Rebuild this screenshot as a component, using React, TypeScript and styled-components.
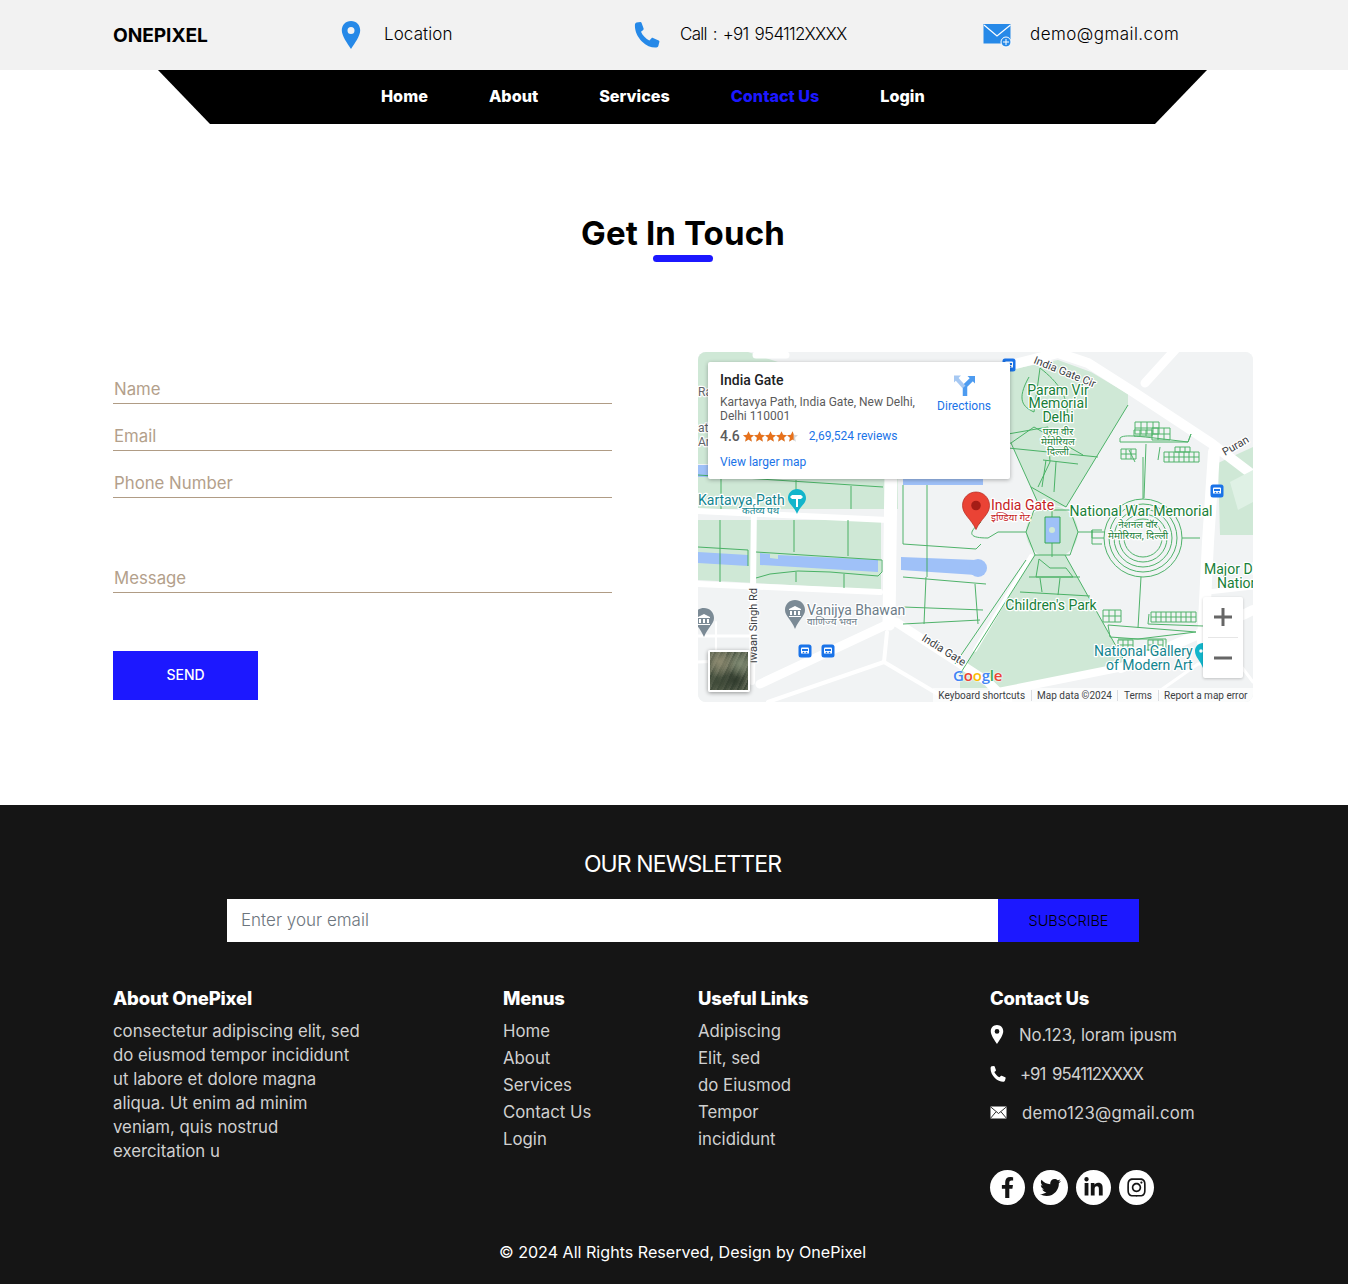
import React from 'react';
import styled, { createGlobalStyle } from 'styled-components';
import { FaFacebookF, FaTwitter, FaLinkedinIn, FaInstagram } from 'react-icons/fa';

const BLUE = '#1c18ff';
const FONT = 'Inter, "Noto Sans", sans-serif';

const GlobalStyle = createGlobalStyle`
  body {
    margin: 0;
    background: #fff;
    font-family: ${FONT};
    color: #000;
  }
  * { box-sizing: border-box; }
`;

const TopBar = styled.header`
  display: grid;
  grid-template-columns: 228px 293px 349px 1fr;
  align-items: center;
  height: 70px;
  padding-left: 113px;
  background: #f2f2f2;
`;

const Logo = styled.div`
  font-size: 19.2px;
  font-weight: 700;
  letter-spacing: -0.1px;
`;

const TopItem = styled.div<{ $gap: number; $spacing: number; $word?: number }>`
  display: flex;
  align-items: center;
  gap: ${(p) => p.$gap}px;
  font-size: 17px;
  font-weight: 300;
  letter-spacing: ${(p) => p.$spacing}px;
  word-spacing: ${(p) => p.$word ?? 0}px;
  margin-top: -3px;
  svg { flex: none; margin-top: 3px; }
`;

const Nav = styled.nav`
  display: flex;
  align-items: center;
  gap: 61px;
  width: 1049px;
  height: 54px;
  margin-left: 158px;
  padding: 0 0 2px 223px;
  background: #000;
  clip-path: polygon(0 0, 100% 0, calc(100% - 52px) 100%, 52px 100%);
`;

const NavLink = styled.a<{ $active?: boolean }>`
  color: ${(p) => (p.$active ? BLUE : '#fff')};
  font-size: 16.2px;
  font-weight: 800;
  text-decoration: none;
`;

const Main = styled.main`
  padding: 88px 95px 103px 113px;
`;

const Title = styled.h1`
  margin: 0;
  text-align: center;
  font-size: 33px;
  line-height: 42px;
  font-weight: 700;
  letter-spacing: 0.15px;
`;

const TitleBar = styled.div`
  width: 60px;
  height: 7px;
  margin: 1px auto 0;
  border-radius: 4px;
  background: ${BLUE};
`;

const ContactGrid = styled.div`
  display: grid;
  grid-template-columns: 499px 555px;
  gap: 86px;
  margin-top: 90px;
`;

const Form = styled.form`
  display: flex;
  flex-direction: column;
`;

const Field = styled.input<{ $top: number }>`
  display: block;
  width: 100%;
  height: 26px;
  margin-top: ${(p) => p.$top}px;
  padding: 0 1px 4px;
  border: 0;
  border-bottom: 1px solid #b09c85;
  background: transparent;
  font-family: ${FONT};
  font-size: 16.8px;
  outline: none;
  &::placeholder { color: #b3a08b; opacity: 1; }
`;

const SendButton = styled.button`
  width: 145px;
  height: 49px;
  margin-top: 58px;
  padding: 0 0 2px;
  border: 0;
  background: ${BLUE};
  color: #fff;
  font-family: ${FONT};
  font-size: 14px;
  font-weight: 500;
`;

const MapFrame = styled.div`
  position: relative;
  width: 555px;
  height: 350px;
  border-radius: 8px;
  overflow: hidden;
  background: #f1f3f4;
  font-family: Roboto, sans-serif;
  svg.base { display: block; }
`;

const InfoCard = styled.div`
  position: absolute;
  left: 10px;
  top: 10px;
  width: 302px;
  height: 117px;
  padding: 9px 12px;
  border-radius: 2px;
  background: #fff;
  box-shadow: 0 1px 4px rgba(0, 0, 0, 0.3);
  color: #5b5b5b;
  font-size: 12px;
  line-height: 14px;
`;

const PlaceName = styled.div`
  color: #202124;
  font-size: 14px;
  font-weight: 500;
  line-height: 18px;
  margin-bottom: 6px;
`;

const RatingRow = styled.div`
  display: flex;
  align-items: center;
  margin-top: 5px;
  height: 16px;
  font-size: 14px;
  font-weight: 500;
`;

const Stars = styled.span`
  display: inline-flex;
  margin: 0 11px 0 3px;
`;

const MapLink = styled.a`
  color: #1a73e8;
  font-size: 12px;
  font-weight: 400;
  text-decoration: none;
`;

const LargerMap = styled(MapLink)`
  display: block;
  margin-top: 11px;
`;

const Directions = styled.div`
  position: absolute;
  right: 19px;
  top: 12px;
  display: flex;
  flex-direction: column;
  align-items: center;
  gap: 3px;
  color: #1a73e8;
  font-size: 12px;
`;

const ZoomBox = styled.div`
  position: absolute;
  right: 10px;
  top: 245px;
  width: 40px;
  height: 81px;
  display: flex;
  flex-direction: column;
  align-items: center;
  justify-content: center;
  border-radius: 2px;
  background: #fff;
  box-shadow: 0 1px 3px rgba(0, 0, 0, 0.2);
`;

const ZoomDivider = styled.div`
  width: 30px;
  height: 1px;
  margin: 0;
  background: #e6e6e6;
`;

const ZoomButton = styled.div`
  display: flex;
  align-items: center;
  justify-content: center;
  width: 40px;
  height: 40px;
`;

const Thumb = styled.div`
  position: absolute;
  left: 10px;
  top: 298px;
  width: 42px;
  height: 42px;
  border: 2px solid #fff;
  border-radius: 2px;
  box-shadow: 0 1px 4px rgba(0, 0, 0, 0.4);
  background:
    radial-gradient(circle at 25% 25%, #8d8a70 0, transparent 40%),
    radial-gradient(circle at 80% 30%, #7f8a72 0, transparent 35%),
    radial-gradient(circle at 65% 75%, #2f3a2c 0, transparent 45%),
    radial-gradient(circle at 20% 80%, #3f4a38 0, transparent 40%),
    repeating-linear-gradient(115deg, #5c6450 0 2px, #6f7562 2px 4px, #465040 4px 6px);
`;

const Attribution = styled.div`
  position: absolute;
  right: 0;
  bottom: 0;
  display: flex;
  align-items: center;
  height: 14px;
  color: #3c4043;
  font-size: 10px;
  background: rgba(255, 255, 255, 0.7);
`;

const AttrItem = styled.span`
  padding: 0 5.5px;
  border-left: 1px solid #dadce0;
  &:first-child { border-left: 0; }
`;

const GoogleMark = styled.div`
  position: absolute;
  left: 255px;
  top: 313px;
  font-family: "Open Sans", sans-serif;
  font-size: 15px;
  font-weight: 600;
  letter-spacing: -0.2px;
  text-shadow: 0 0 2px #fff, 0 0 2px #fff;
  span:nth-child(1), span:nth-child(4) { color: #4285f4; }
  span:nth-child(2), span:nth-child(6) { color: #ea4335; }
  span:nth-child(3) { color: #fbbc05; }
  span:nth-child(5) { color: #34a853; }
`;

const Footer = styled.footer`
  height: 479px;
  padding-top: 45px;
  background: #151515;
  color: #fff;
`;

const NewsTitle = styled.h2`
  margin: 0 0 0 17px;
  text-align: center;
  font-size: 23px;
  line-height: 28px;
  font-weight: 400;
  letter-spacing: -0.9px;
`;

const NewsForm = styled.form`
  display: flex;
  width: 912px;
  height: 43px;
  margin: 21px 0 0 227px;
`;

const NewsInput = styled.input`
  flex: 1;
  min-width: 0;
  padding: 0 14px 2px;
  border: 0;
  background: #fff;
  font-family: ${FONT};
  font-size: 17px;
  font-weight: 300;
  outline: none;
  &::placeholder { color: #6c757d; opacity: 1; }
`;

const SubscribeButton = styled.button`
  width: 141px;
  border: 0;
  background: ${BLUE};
  color: #000;
  font-family: ${FONT};
  font-size: 14.5px;
  font-weight: 300;
`;

const Columns = styled.div`
  display: grid;
  grid-template-columns: 390px 195px 292px 1fr;
  margin-top: 43px;
  padding-left: 113px;
`;

const ColTitle = styled.h3`
  margin: 0 0 8px;
  font-size: 18.5px;
  line-height: 26px;
  font-weight: 800;
  letter-spacing: -0.2px;
`;

const AboutText = styled.p`
  margin: 1px 0 0;
  color: #d0d0d0;
  font-size: 16.8px;
  line-height: 24px;
  font-weight: 400;
  white-space: nowrap;
`;

const LinkList = styled.ul`
  margin: -1px 0 0;
  padding: 0;
  list-style: none;
`;

const LinkItem = styled.li`
  color: #d0d0d0;
  font-size: 16.8px;
  line-height: 27px;
  font-weight: 400;
`;

const ContactRows = styled.div`
  margin-top: -4px;
`;

const ContactRow = styled.div<{ $gap: number; $spacing: number; $word: number }>`
  display: flex;
  align-items: center;
  gap: ${(p) => p.$gap}px;
  height: 39px;
  color: #d0d0d0;
  font-size: 16.8px;
  font-weight: 400;
  letter-spacing: ${(p) => p.$spacing}px;
  word-spacing: ${(p) => p.$word}px;
  svg { flex: none; }
`;

const Socials = styled.div`
  display: flex;
  gap: 8px;
  margin-top: 38px;
`;

const SocialLink = styled.a`
  display: flex;
  align-items: center;
  justify-content: center;
  width: 35px;
  height: 35px;
  border-radius: 50%;
  background: #fff;
  color: #151515;
  font-size: 21px;
`;

const Copyright = styled.div`
  margin-top: 37px;
  padding-left: 17px;
  text-align: center;
  font-size: 16.1px;
  font-weight: 400;
  color: #fff;
`;

const PinIcon = ({ w, h, color }: { w: number; h: number; color: string }) => (
  <svg width={w} height={h} viewBox="0 0 20 28">
    <path
      fillRule="evenodd"
      fill={color}
      d="M10 0C4.5 0 .8 4.1.8 9.3c0 5.7 5.5 13.2 9.2 18.7 3.7-5.5 9.2-13 9.2-18.7C19.200 4.100 15.500 0 10 0Zm0 6a3.500 3.500 0 1 1 0 7 3.500 3.500 0 0 1 0-7Z"
    />
  </svg>
);

const PhoneIcon = ({ size, color }: { size: number; color: string }) => (
  <svg width={size} height={size} viewBox="0 0 26 26">
    <path
      fill={color}
      d="M2.500.6 6.400.1c.6 0 1 .3 1.200.9l2 5.500c.2.6 0 1.100-.4 1.500L7 9.700c1.500 3.600 4.900 7 8.400 8.700l2.100-2.200c.4-.4 1-.5 1.500-.3l5.700 2.500c.6.300.8.800.7 1.400l-1 3.900c-.3.900-1 1.600-2 1.800-4.500.4-9.800-1.500-14.500-6.100C3.400 14.800.900 9.400.9 3.500.9 2 1.400 1 2.500.6Z"
    />
  </svg>
);

const MailPlusIcon = () => (
  <svg width={29} height={25} viewBox="0 0 29 25">
    <rect x="0.500" y="1" width="27" height="19.500" fill="#2689e8" />
    <path d="M1 2 14 13 27.500 2" fill="none" stroke="#fff" strokeWidth="1.200" />
    <circle cx="23" cy="19" r="5" fill="#2689e8" stroke="#fff" strokeWidth="1" />
    <path d="M23 16v6M20 19h6" stroke="#fff" strokeWidth="1" />
  </svg>
);

const SmallMail = () => (
  <svg width={17} height={13} viewBox="0 0 17 13">
    <rect x="0.500" y="0.500" width="16" height="12" fill="#fff" />
    <path d="M.5.8 8.500 7.500 16.500.8M.5 12.300l5.500-6.500M16.500 12.300 11 5.800" fill="none" stroke="#151515" strokeWidth="0.900" />
  </svg>
);

const STAR = 'M5 .2 6.400 3.500 10 3.800 7.300 6.100 8.100 9.700 5 7.800 1.900 9.700 2.700 6.100 0 3.800 3.600 3.500Z';

const Star = ({ part }: { part: number }) => (
  <svg width={11} height={11} viewBox="0 0 10 10">
    <path d={STAR} fill="#d6d6d6" />
    <path d={STAR} fill="#e7711b" style={{ clipPath: `inset(0 ${100 - part}% 0 0)` }} />
  </svg>
);

const green = '#34a853';

// small walkway grids next to the memorial, drawn as cell lines
const PathGrid = ({ x, y, cols, rows, cell }: { x: number; y: number; cols: number; rows: number; cell: number }) => {
  const lines: string[] = [];
  for (let c = 0; c <= cols; c++) lines.push(`M${x + c * cell} ${y}v${rows * cell}`);
  for (let r = 0; r <= rows; r++) lines.push(`M${x} ${y + r * cell}h${cols * cell}`);
  return <path d={lines.join('')} />;
};

// the street map is a single drawing, map coordinates are px from its top-left corner
const StreetMap = () => {
  const label = { paintOrder: 'stroke' as const, stroke: '#fff', strokeWidth: 2.5, strokeLinejoin: 'round' as const };
  const rings = [39, 34, 29, 24, 19];
  return (
    <svg className="base" width={555} height={350} viewBox="0 0 555 350" fontFamily="Roboto, 'Noto Sans', sans-serif">
      <rect width="555" height="350" fill="#f1f3f4" />
      {/* parks */}
      <g fill="#cfe8d6">
        <path d="M0 0H50L80 10H10V112H0Z" />
        <path d="M10 10H200V157H0V125H10Z" />
        <path d="M0 168H183V238L0 228Z" />
        <path d="M300 20 360 8 393 20 430 42 430 53 368 155 340 151 313 91 280 91V20Z" />
        <path d="M337 203 367 203 428 312 300 338 262 338 262 322Z" />
        <circle cx="354" cy="180" r="26" />
        <path d="M520 111 555 95V183H522Z" />
      </g>
      {/* roads */}
      <g fill="none" stroke="#fff" strokeLinecap="round">
        <path d="M0 159 190 168" strokeWidth="6" />
        <path d="M0 232 182 240" strokeWidth="6" />
        <path d="M193 120 191 272" strokeWidth="13" />
        <path d="M56 150 54 330" strokeWidth="6" />
        <path d="M62 332 190 272" strokeWidth="9" />
        <path d="M198 270 290 330 310 350" strokeWidth="9" />
        <path d="M189 280 186 310" strokeWidth="4" />
        <path d="M186 310 240 342" strokeWidth="4" />
        <path d="M186 310 70 350" strokeWidth="4" />
        <path d="M313 13 360 1 390 11 437 41 513 91 555 123" strokeWidth="10" />
        <path d="M516 100 510 190 505 290" strokeWidth="12" />
        <path d="M423 316 547 262 555 258" strokeWidth="10" />
        <path d="M477 -2 447 31" strokeWidth="9" />
        <path d="M58 3H88" strokeWidth="7" />
        <path d="M555 235 510 240" strokeWidth="5" />
        <path d="M0 284 55 284" strokeWidth="3" />
        <path d="M0 310 55 308" strokeWidth="3" />
        <path d="M18 270V300H34V318" strokeWidth="2" />
        <path d="M300 340 430 314" strokeWidth="8" />
        <path d="M460 340 500 312 540 310 555 330" strokeWidth="3" />
        <path d="M333 204 277 298" strokeWidth="4" />
      </g>
      <path d="M532 130 555 118 555 150 540 158Z" fill="#dff1e5" />
      {/* water */}
      <g fill="#9fc1f8">
        <path d="M0 200 50 203V214L0 211Z" />
        <path d="M62 201 72 202V206L80 207V203L180 208V220L62 213Z" />
        <path d="M203 205 278 208 278 223 203 218Z" />
        <circle cx="280" cy="216" r="9" />
        <rect x="347" y="165" width="15" height="26" />
        <rect x="0" y="113" width="190" height="12" />
        <rect x="205" y="118" width="80" height="15" />
      </g>
      {/* park paths */}
      <g fill="none" stroke={green} strokeWidth="1" opacity="0.85">
        <path d="M0 123 185 135M23 124V157M98 128V157M153 134V157" />
        <path d="M0 195 50 198V214M22 168V230M96 168V200M150 168V204M58 200 184 208V220L180 224 132 220 100 219 72 222 58 226M98 220V230M146 222V236" />
        <path d="M205 133V192M205 192 278 197 283 192M205 225 288 232M229 133V225M228 225 226 272M205 255 285 258M205 272 282 268M277 232 280 272M283 170 C268 182 272 186 290 186L300 180" />
        <path d="M336 158 H372 L380 180 372 203 H337 L328 180Z" />
        <path d="M328 180H300M380 180H406M354 150V165M354 191V205" />
        <path d="M313 91 340 151M368 155 430 53M333 135 368 155M280 100 313 91 336 75 385 103M310 96 400 105M310 82 350 75 352 110 340 135M348 108 344 135M358 110 356 140M345 108 380 112" />
        <path d="M342 16 C360 30 372 45 369 70M342 16 336 60 C325 55 318 48 331 25" />
        <path d="M422 86 C426 82 440 84 490 90 L493 82 490 90 H422ZM448 92 446 146M431 98 437 110M462 95 460 108" />
        <path d="M337 203 262 322M328 208 257 312M367 203 428 312M341 207 352 216 368 216 375 225 338 225ZM331 225H382M322 240 392 244M342 226 344 240M362 226 360 243" />
        <path d="M443 225 440 276M451 262 450 272 505 274M410 273 498 280 440 287 412 285ZM420 287h48v11h-48" />
        <PathGrid x={437} y={70} cols={4} rows={2} cell={6} />
        <PathGrid x={436} y={78} cols={3} rows={1} cell={6} />
        <PathGrid x={454} y={76} cols={3} rows={2} cell={6} />
        <PathGrid x={423} y={97} cols={3} rows={2} cell={5} />
        <PathGrid x={466} y={100} cols={7} rows={2} cell={5} />
        <PathGrid x={477} y={95} cols={3} rows={1} cell={5} />
        <PathGrid x={405} y={258} cols={3} rows={2} cell={6} />
        <PathGrid x={453} y={260} cols={9} rows={2} cell={5} />
        <PathGrid x={420} y={288} cols={3} rows={2} cell={5} />
        <PathGrid x={450} y={288} cols={3} rows={2} cell={5} />
      </g>
      <g fill="none" stroke={green} strokeWidth="1" opacity="0.85">
        {rings.map((r) => <circle key={r} cx="445" cy="186" r={r} />)}
        <path d="M406 186H394V178H404M394 178V192H404M484 186H502M445 147V105" />
      </g>
      <path d="M347 165h15v26h-15z" fill="none" stroke={green} />
      <circle cx="354" cy="178" r="3" fill="#cfe8d6" />
      {/* road labels */}
      <g fill="#3c4043" fontSize="11" style={label}>
        <text transform="translate(335 11) rotate(22)">India Gate Cir</text>
        <text transform="translate(527 104) rotate(-30)">Puran</text>
        <text transform="translate(59 311) rotate(-90)" fontSize="11">iwaan Singh Rd</text>
        <text transform="translate(223 288) rotate(32)" fontSize="11">India Gate</text>
      </g>
      {/* place labels */}
      <g fill="#188038" fontSize="14" textAnchor="middle" style={label}>
        <text x="360" y="43">Param Vir</text>
        <text x="360" y="56">Memorial</text>
        <text x="360" y="70">Delhi</text>
        <text x="360" y="83" fontSize="10">परम वीर</text>
        <text x="360" y="93" fontSize="10">मेमोरियल</text>
        <text x="360" y="103" fontSize="10">दिल्ली</text>
        <text x="443" y="164">National War Memorial</text>
        <text x="440" y="176" fontSize="10">नेशनल वॉर</text>
        <text x="440" y="187" fontSize="10">मेमोरियल, दिल्ली</text>
        <text x="353" y="258">Children's Park</text>
        <text x="506" y="222" textAnchor="start">Major Dl</text>
        <text x="519" y="236" textAnchor="start">Nation</text>
      </g>
      <g fill="#12858f" fontSize="14" style={label}>
        <text x="0" y="153">Kartavya Path</text>
        <text x="44" y="162" fontSize="10">कर्तव्य पथ</text>
        <text x="396" y="304">National Gallery</text>
        <text x="408" y="318">of Modern Art</text>
      </g>
      <g fill="#6b7c88" fontSize="14" style={label}>
        <text x="109" y="263">Vanijya Bhawan</text>
        <text x="109" y="273" fontSize="10">वाणिज्य भवन</text>
      </g>
      <g fill="#c5221f" fontSize="14" style={label}>
        <text x="293" y="158">India Gate</text>
        <text x="293" y="169" fontSize="10">इण्डिया गेट</text>
      </g>
      <g fill="#5f6368" fontSize="12" style={label}>
        <text x="0" y="44">Ra</text>
        <text x="0" y="80">at'</text>
        <text x="0" y="94">Ar</text>
      </g>
      {/* markers */}
      <path d="M97 148c-5 0-9 4-9 9 0 6 6 8 9 16 3-8 9-10 9-16 0-5-4-9-9-9Z" transform="translate(2 -11)" fill="#12b5cb" />
      <path d="M95 143h8l2 2-2 2h-3v8h-2v-8h-4l-2-2 2-2Z" fill="#fff" />
      <path d="M97 248c-5.500 0-10 4-10 10 0 6 6 9 10 19 4-10 10-13 10-19 0-6-4.500-10-10-10Z" fill="#7b8a95" />
      <path d="M91 257l6-3 6 3v1H91Zm1 2h2v4h-2Zm4 0h2v4h-2Zm4 0h2v4h-2Zm-9 5h12v1H91Z" fill="#fff" />
      <path d="M6 256c-5.500 0-10 4-10 10 0 6 6 9 10 19 4-10 10-13 10-19 0-6-4.500-10-10-10Z" fill="#7b8a95" />
      <path d="M0 265l6-3 6 3v1H0Zm1 2h2v4H1Zm4 0h2v4H5Zm4 0h2v4H9Zm-9 5h12v1H0Z" fill="#fff" />
      <path d="M505 291c-5 0-8 4-8 8 0 6 5 9 8 17 3-8 8-11 8-17 0-4-3-8-8-8Z" fill="#12b5cb" />
      <circle cx="503" cy="299" r="1.800" fill="#fff" />
      {[[311, 13], [519, 139], [107, 299], [130, 299]].map(([x, y]) => (
        <g key={`${x}-${y}`} transform={`translate(${x - 6.500} ${y - 6.500})`}>
          <rect width="13" height="13" rx="2.500" fill="#1a73e8" />
          <path d="M3.500 3h6a1 1 0 0 1 1 1v5h-8V4a1 1 0 0 1 1-1Z" fill="#fff" />
          <rect x="3.500" y="4.500" width="6" height="2" fill="#1a73e8" />
          <circle cx="5" cy="8" r=".8" fill="#1a73e8" />
          <circle cx="8" cy="8" r=".8" fill="#1a73e8" />
        </g>
      ))}
      <path d="M278 140c-7.500 0-13.500 6-13.500 13.500 0 9 8.500 13 13.500 24 5-11 13.500-15 13.500-24 0-7.500-6-13.500-13.500-13.500Z" fill="#ea4335" stroke="#b3261e" strokeWidth=".7" />
      <circle cx="278" cy="153.500" r="4.800" fill="#a51d16" />
    </svg>
  );
};

const contactRows = [
  { icon: <PinIcon w={14} h={19} color="#fff" />, gap: 15, spacing: -0.1, word: 0, text: 'No.123, loram ipusm' },
  { icon: <PhoneIcon size={16} color="#fff" />, gap: 14, spacing: -1, word: 3, text: '+91 954112XXXX' },
  { icon: <SmallMail />, gap: 15, spacing: 0.2, word: 0, text: 'demo123@gmail.com' },
];

const aboutLines = [
  'consectetur adipiscing elit, sed',
  'do eiusmod tempor incididunt',
  'ut labore et dolore magna',
  'aliqua. Ut enim ad minim',
  'veniam, quis nostrud',
  'exercitation u',
];

export default function App() {
  return (
    <>
      <GlobalStyle />
      <TopBar>
        <Logo>ONEPIXEL</Logo>
        <TopItem $gap={23} $spacing={0.1}>
          <PinIcon w={20} h={28} color="#2689e8" />
          <span>Location</span>
        </TopItem>
        <TopItem $gap={20} $spacing={-0.75} $word={2}>
          <PhoneIcon size={26} color="#2689e8" />
          <span>Call : +91 954112XXXX</span>
        </TopItem>
        <TopItem $gap={18} $spacing={0.45}>
          <MailPlusIcon />
          <span>demo@gmail.com</span>
        </TopItem>
      </TopBar>
      <Nav>
        <NavLink href="#">Home</NavLink>
        <NavLink href="#">About</NavLink>
        <NavLink href="#">Services</NavLink>
        <NavLink href="#" $active>Contact Us</NavLink>
        <NavLink href="#">Login</NavLink>
      </Nav>
      <Main>
        <Title>Get In Touch</Title>
        <TitleBar />
        <ContactGrid>
          <Form onSubmit={(e) => e.preventDefault()}>
            <Field $top={26} placeholder="Name" />
            <Field $top={21} placeholder="Email" />
            <Field $top={21} placeholder="Phone Number" />
            <Field $top={69} placeholder="Message" />
            <SendButton>SEND</SendButton>
          </Form>
          <MapFrame>
            <StreetMap />
            <InfoCard>
              <PlaceName>India Gate</PlaceName>
              Kartavya Path, India Gate, New Delhi,
              <br />
              Delhi 110001
              <RatingRow>
                4.6
                <Stars>
                  <Star part={100} />
                  <Star part={100} />
                  <Star part={100} />
                  <Star part={100} />
                  <Star part={60} />
                </Stars>
                <MapLink href="#">2,69,524 reviews</MapLink>
              </RatingRow>
              <LargerMap href="#">View larger map</LargerMap>
              <Directions>
                <svg width={22} height={22} viewBox="0 0 22 22">
                  <path d="M12 22V12L19 5" fill="none" stroke="#4d9bf0" strokeWidth="4.500" />
                  <path d="M14.500 2H22V9.500Z" fill="#4d9bf0" />
                  <path d="M11 13 3 4" fill="none" stroke="#a6c8f2" strokeWidth="4" />
                  <path d="M1 1.500h7l-7 7Z" fill="#a6c8f2" />
                </svg>
                <span>Directions</span>
              </Directions>
            </InfoCard>
            <Thumb />
            <GoogleMark>
              <span>G</span><span>o</span><span>o</span><span>g</span><span>l</span><span>e</span>
            </GoogleMark>
            <ZoomBox>
              <ZoomButton>
                <svg width={18} height={18} viewBox="0 0 18 18"><path d="M7.500 0h3v7.500H18v3h-7.500V18h-3v-7.500H0v-3h7.500Z" fill="#666" /></svg>
              </ZoomButton>
              <ZoomDivider />
              <ZoomButton>
                <svg width={18} height={18} viewBox="0 0 18 18"><path d="M0 7.500h18v3H0Z" fill="#666" /></svg>
              </ZoomButton>
            </ZoomBox>
            <Attribution>
              <AttrItem>Keyboard shortcuts</AttrItem>
              <AttrItem>Map data ©2024</AttrItem>
              <AttrItem>Terms</AttrItem>
              <AttrItem>Report a map error</AttrItem>
            </Attribution>
          </MapFrame>
        </ContactGrid>
      </Main>
      <Footer>
        <NewsTitle>OUR NEWSLETTER</NewsTitle>
        <NewsForm onSubmit={(e) => e.preventDefault()}>
          <NewsInput placeholder="Enter your email" />
          <SubscribeButton>SUBSCRIBE</SubscribeButton>
        </NewsForm>
        <Columns>
          <div>
            <ColTitle>About OnePixel</ColTitle>
            <AboutText>
              {aboutLines.map((line) => (
                <React.Fragment key={line}>
                  {line}
                  <br />
                </React.Fragment>
              ))}
            </AboutText>
          </div>
          <div>
            <ColTitle>Menus</ColTitle>
            <LinkList>
              {['Home', 'About', 'Services', 'Contact Us', 'Login'].map((t) => <LinkItem key={t}>{t}</LinkItem>)}
            </LinkList>
          </div>
          <div>
            <ColTitle>Useful Links</ColTitle>
            <LinkList>
              {['Adipiscing', 'Elit, sed', 'do Eiusmod', 'Tempor', 'incididunt'].map((t) => <LinkItem key={t}>{t}</LinkItem>)}
            </LinkList>
          </div>
          <div>
            <ColTitle>Contact Us</ColTitle>
            <ContactRows>
              {contactRows.map((row) => (
                <ContactRow key={row.text} $gap={row.gap} $spacing={row.spacing} $word={row.word}>
                  {row.icon}
                  <span>{row.text}</span>
                </ContactRow>
              ))}
            </ContactRows>
            <Socials>
              <SocialLink href="#"><FaFacebookF /></SocialLink>
              <SocialLink href="#"><FaTwitter /></SocialLink>
              <SocialLink href="#"><FaLinkedinIn /></SocialLink>
              <SocialLink href="#"><FaInstagram /></SocialLink>
            </Socials>
          </div>
        </Columns>
        <Copyright>© 2024 All Rights Reserved, Design by OnePixel</Copyright>
      </Footer>
    </>
  );
}
